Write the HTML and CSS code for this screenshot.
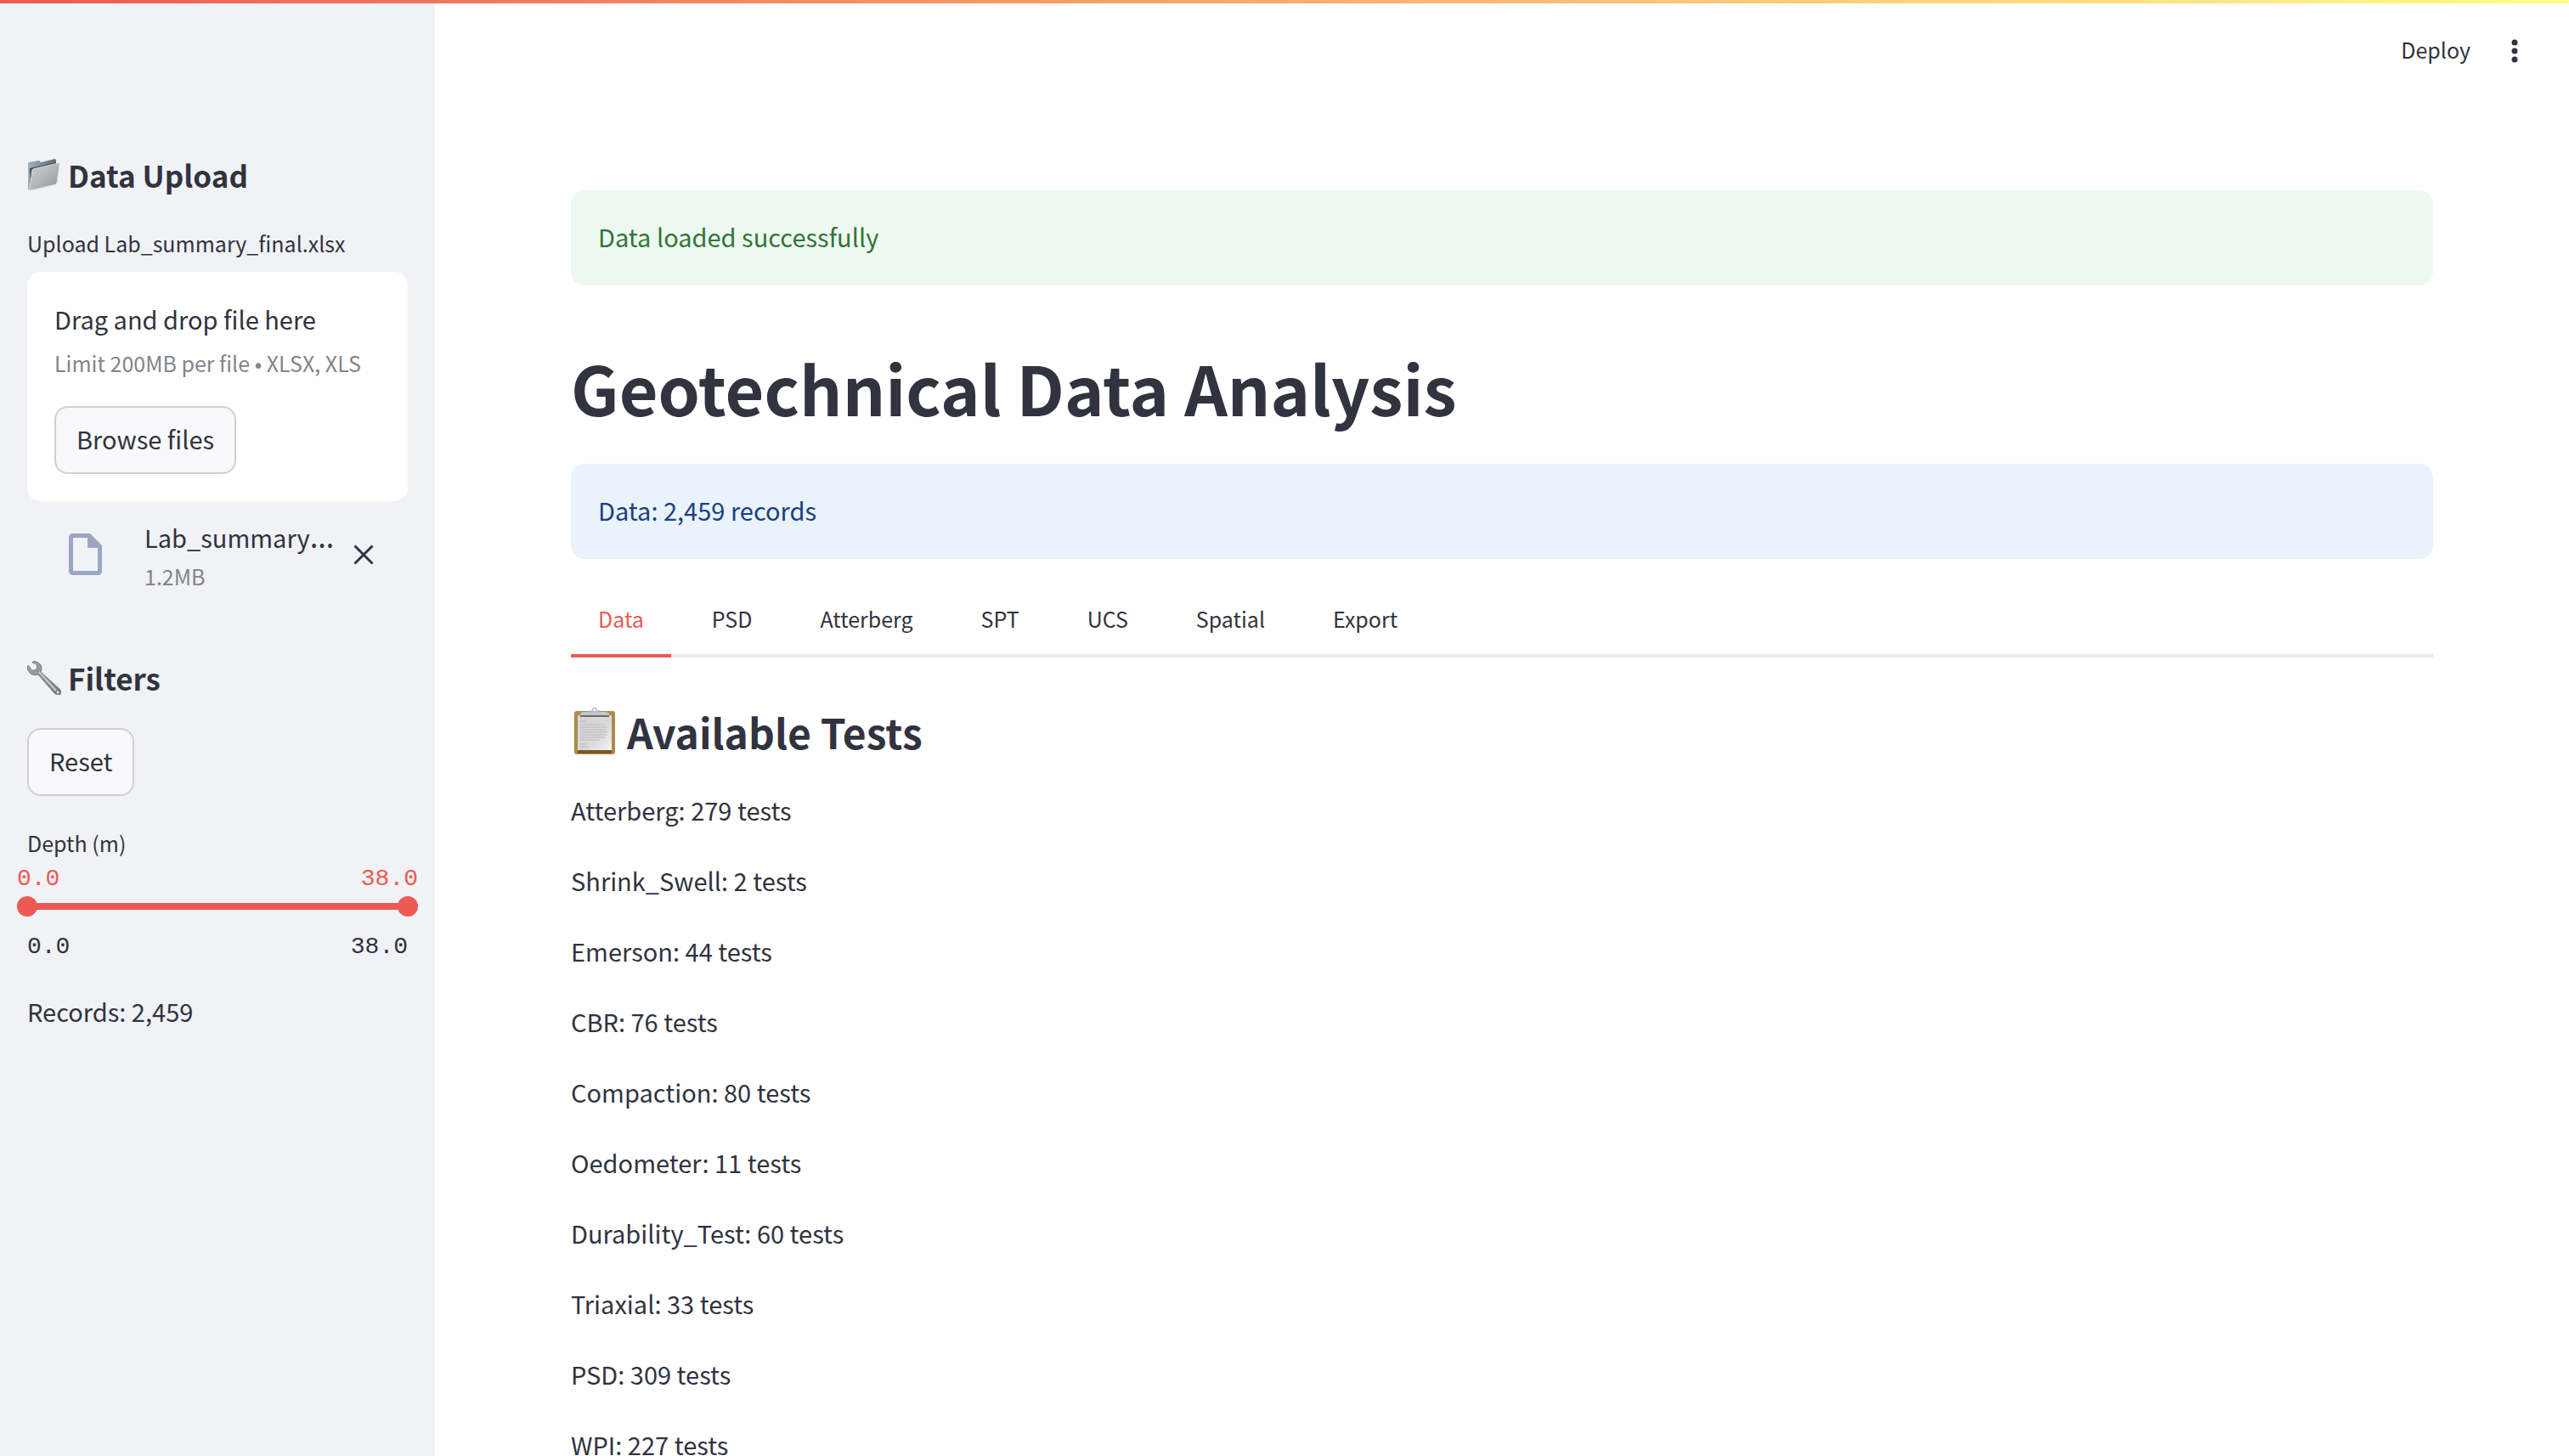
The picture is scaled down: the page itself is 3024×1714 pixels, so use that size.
FILE: index.html
```html
<!DOCTYPE html>
<html lang="en">
<head>
<meta charset="utf-8">
<meta name="viewport" content="width=device-width, initial-scale=1">
<title>Geotechnical Data Analysis</title>
<link rel="stylesheet" href="styles.css">
</head>
<body>
<div class="decoration"></div>
<div class="app">
  <aside class="sidebar">
    <h3 class="side-title">
      <svg class="emoji" viewBox="0 0 40 40" aria-hidden="true">
        <defs>
          <linearGradient id="folderFront" x1="0" y1="0" x2="1" y2="1"><stop offset="0" stop-color="#c9cdd0"/><stop offset=".5" stop-color="#b3b7ba"/><stop offset="1" stop-color="#8d9296"/></linearGradient>
          <linearGradient id="folderBack" x1="0" y1="0" x2="1" y2="0"><stop offset="0" stop-color="#a3b1bb"/><stop offset="1" stop-color="#5b6b78"/></linearGradient>
        </defs>
        <path d="M1 6 2 5 14 3 16 5 33 1 34 3V28L3 38 1 37Z" fill="url(#folderBack)"/>
        <path d="M3 12 34 5V9L7 15 4 36Z" fill="#42525f"/>
        <path d="M7 13 37 6Q38 6 38 7L35 29 34 31 4 38 3 37 6 14Z" fill="url(#folderFront)" stroke="#d9dddf" stroke-width="1"/>
      </svg>
      <span>Data Upload</span>
    </h3>
    <section class="uploader">
      <label class="field-label" for="file-button">Upload Lab_summary_final.xlsx</label>
      <div class="dropzone">
        <span class="drop-main">Drag and drop file here</span>
        <span class="drop-limit">Limit 200MB per file • XLSX, XLS</span>
        <button class="btn" id="file-button" type="button">Browse files</button>
      </div>
      <div class="file">
        <svg class="file-icon" viewBox="0 0 40 50" aria-hidden="true"><path fill-rule="evenodd" d="M5 0H25L39 14V44Q39 49 34 49H5Q0 49 0 44V5Q0 0 5 0ZM5 5V44H34V17H22V5Z" fill="#9ca6c3"/></svg>
        <div class="file-text">
          <span class="file-name">Lab_summary<span class="dots">…</span></span>
          <span class="file-size">1.2MB</span>
        </div>
        <button class="icon-btn" type="button" aria-label="Remove file">
          <svg class="close-icon" viewBox="0 0 24 24" aria-hidden="true"><path d="M1.500 1.500 22.500 22.500M22.500 1.500 1.500 22.500" stroke="#31333f" stroke-width="3" fill="none"/></svg>
        </button>
      </div>
    </section>
    <h3 class="side-title">
      <svg class="emoji" viewBox="0 0 40 40" aria-hidden="true">
        <defs><linearGradient id="steel" x1="0" y1="0" x2="1" y2="1"><stop offset="0" stop-color="#a9b0b8"/><stop offset=".4" stop-color="#8b9199"/><stop offset="1" stop-color="#82777a"/></linearGradient></defs>
        <path fill-rule="evenodd" d="M7 .500Q13 .500 16 5Q18 9 16 13L39 34Q41 38 38 40Q35 41 32 38L13 16Q8 18 4 15Q0 12 0 6L2 6 5 11 9 11 12 8 11 4 6 2ZM36 35A2 2 0 1 0 36 39A2 2 0 1 0 36 35Z" fill="url(#steel)" stroke="#747b85" stroke-width="1"/>
        <path d="M14 13 34 35" stroke="#c6cad0" stroke-width="2"/>
      </svg>
      <span>Filters</span>
    </h3>
    <button class="btn reset" type="button">Reset</button>
    <fieldset class="slider">
      <legend class="field-label">Depth (m)</legend>
      <div class="slider-values"><output>0.0</output><output>38.0</output></div>
      <div class="slider-track">
        <input class="range" type="range" min="0" max="38" step="0.1" value="0" aria-label="Minimum depth">
        <input class="range" type="range" min="0" max="38" step="0.1" value="38" aria-label="Maximum depth">
      </div>
      <div class="slider-bounds"><span>0.0</span><span>38.0</span></div>
    </fieldset>
    <p class="records">Records: 2,459</p>
  </aside>
  <div class="main">
    <header class="toolbar">
      <button class="deploy" type="button">Deploy</button>
      <button class="icon-btn" type="button" aria-label="Main menu">
        <svg class="menu-icon" viewBox="0 0 8 28" aria-hidden="true"><circle cx="4" cy="4" r="3.500"/><circle cx="4" cy="14" r="3.500"/><circle cx="4" cy="24" r="3.500"/></svg>
      </button>
    </header>
    <main class="content">
      <div class="alert success" role="status">Data loaded successfully</div>
      <h1 class="title">Geotechnical Data Analysis</h1>
      <div class="alert info" role="status">Data: 2,459 records</div>
      <div class="tabs" role="tablist">
        <button class="tab active" type="button" role="tab" aria-selected="true">Data</button>
        <button class="tab" type="button" role="tab">PSD</button>
        <button class="tab" type="button" role="tab">Atterberg</button>
        <button class="tab" type="button" role="tab">SPT</button>
        <button class="tab" type="button" role="tab">UCS</button>
        <button class="tab" type="button" role="tab">Spatial</button>
        <button class="tab" type="button" role="tab">Export</button>
      </div>
      <h2 class="section-title">
        <svg class="clipboard" viewBox="0 0 56 56" aria-hidden="true">
          <defs><linearGradient id="paper" x1="0" y1="0" x2="1" y2="1"><stop offset="0" stop-color="#d4d4d6"/><stop offset=".6" stop-color="#d9d9da"/><stop offset="1" stop-color="#f4f4f5"/></linearGradient></defs>
          <rect x="4" y="4" width="48" height="51" rx="3" fill="#b08a4d"/>
          <path d="M8 49H48V54H8Z" fill="#7d592b"/>
          <rect x="8" y="9" width="40" height="41" fill="url(#paper)"/>
          <path d="M11 16H18M11 20H39M11 23H42M11 26H41M11 29H43M11 32H42M11 35H40M11 38H34M11 43H18M11 46H21" stroke="#bcbcbf" stroke-width="1"/>
          <path d="M11 10V7Q12 5 17 5H21L24 4H32L35 5H39Q44 5 45 7V10Z" fill="#c2c7cd"/>
          <path d="M11 10H45" stroke="#716a67" stroke-width="2"/>
          <circle cx="28" cy="3" r="2.500" fill="none" stroke="#b4bcc6" stroke-width="1.500"/>
          <path d="M21 5 24 4M32 4 35 5" stroke="#8eb0d2" stroke-width="2"/>
        </svg>
        <span>Available Tests</span>
      </h2>
      <div class="tests">
        <p>Atterberg: 279 tests</p>
        <p>Shrink_Swell: 2 tests</p>
        <p>Emerson: 44 tests</p>
        <p>CBR: 76 tests</p>
        <p>Compaction: 80 tests</p>
        <p>Oedometer: 11 tests</p>
        <p>Durability_Test: 60 tests</p>
        <p>Triaxial: 33 tests</p>
        <p>PSD: 309 tests</p>
        <p>WPI: 227 tests</p>
      </div>
    </main>
  </div>
</div>
</body>
</html>
```
FILE: styles.css
```css
:root {
  --text: #31333f;
  --muted: #83848b;
  --primary: #ec5a53;
  --sans: "Noto Sans CJK JP", "Noto Sans", sans-serif;
  --mono: "Liberation Mono", monospace;
}

* {
  box-sizing: border-box;
}

body {
  margin: 0;
  height: 100vh;
  overflow: hidden;
  background: #fff;
  color: var(--text);
  font: 29px/48px var(--sans);
}

h1, h2, h3, p {
  margin: 0;
}

button {
  font: inherit;
  color: inherit;
  cursor: pointer;
}

/* thin gradient bar across the top of the window */
.decoration {
  position: absolute;
  top: 0;
  left: 0;
  right: 0;
  height: 4px;
  background: linear-gradient(90deg, #ec5a53, #fffd8c);
}

.app {
  display: flex;
  height: 100%;
}

/* Sidebar */
.sidebar {
  flex: none;
  width: 512px;
  padding: 182px 32px 0;
  background: #f0f2f6;
}

.side-title {
  display: flex;
  align-items: center;
  gap: 8px;
  font-size: 35px;
  font-weight: 700;
  line-height: 48px;
}

.emoji {
  flex: none;
  width: 40px;
  height: 40px;
}

.field-label {
  display: block;
  padding: 0;
  font-size: 25px;
  line-height: 40px;
}

.uploader {
  margin: 36px 0 76px;
}

.dropzone {
  display: flex;
  flex-direction: column;
  align-items: flex-start;
  margin-top: 14px;
  padding: 31px 32px 32px;
  border-radius: 16px;
  background: #fff;
}

.drop-limit,
.file-size {
  color: var(--muted);
  font-size: 25px;
  line-height: 40px;
}

.drop-limit {
  margin-top: 8px;
}

.btn {
  height: 80px;
  padding: 0 24px 4px;
  border: 2px solid #d0d0d4;
  border-radius: 16px;
  background: #f9f9fb;
}

.dropzone .btn {
  margin-top: 31px;
}

.file {
  display: flex;
  align-items: center;
  padding: 18px 40px 0 49px;
}

.file-icon {
  flex: none;
  width: 40px;
  height: 50px;
}

.file-text {
  display: flex;
  flex: 1;
  flex-direction: column;
  gap: 2px;
  min-width: 0;
  margin-left: 49px;
}

.file-name {
  white-space: nowrap;
}

.dots {
  font-family: "Noto Sans", sans-serif;
  font-size: 36px;
  line-height: 0;
}

.icon-btn {
  display: flex;
  padding: 0;
  border: 0;
  background: none;
}

.close-icon {
  width: 24px;
  height: 24px;
}

.reset {
  display: block;
  margin-top: 35px;
}

.slider {
  margin: 35px -12px 0;
  padding: 0;
  border: 0;
}

.slider .field-label {
  margin-left: 12px;
}

.slider-values,
.slider-bounds {
  display: flex;
  justify-content: space-between;
  font: 28px/40px var(--mono);
}

.slider-values {
  padding-top: 3px;
  color: var(--primary);
}

.slider-bounds {
  padding: 16px 12px 0;
}

/* both thumbs share one grid cell so that they run on the same track */
.slider-track {
  display: grid;
  height: 24px;
  background: linear-gradient(var(--primary), var(--primary)) center / calc(100% - 24px) 8px no-repeat;
}

.range {
  grid-area: 1 / 1;
  width: 100%;
  height: 24px;
  margin: 0;
  appearance: none;
  background: none;
  pointer-events: none;
}

.range::-webkit-slider-thumb {
  width: 24px;
  height: 24px;
  border-radius: 50%;
  appearance: none;
  background: var(--primary);
  pointer-events: auto;
}

.records {
  margin-top: 31px;
}

/* Main column */
.main {
  flex: 1;
  min-width: 0;
}

.toolbar {
  display: flex;
  align-items: center;
  justify-content: flex-end;
  gap: 48px;
  height: 120px;
  padding-right: 60px;
}

.deploy {
  padding: 0 0 4px;
  border: 0;
  background: none;
  font-size: 25px;
  line-height: 40px;
}

.menu-icon {
  width: 8px;
  height: 28px;
  fill: var(--text);
}

.content {
  padding: 104px 160px 0;
}

.alert {
  padding: 30px 32px 34px;
  border-radius: 16px;
}

.success {
  background: #edf9f0;
  color: #337439;
}

.info {
  background: #eaf2fc;
  color: #194180;
}

.title {
  margin: 67px 0 37px;
  font-size: 79px;
  font-weight: 700;
  line-height: 106px;
}

.tabs {
  display: flex;
  gap: 16px;
  margin-top: 32px;
  box-shadow: inset 0 -4px #e9e9ea;
}

.tab {
  height: 84px;
  padding: 0 32px 4px;
  border: 0;
  border-bottom: 4px solid transparent;
  background: none;
  font-size: 25px;
  line-height: 40px;
}

.tab.active {
  border-bottom-color: var(--primary);
  color: var(--primary);
}

.section-title {
  display: flex;
  align-items: center;
  gap: 10px;
  margin-top: 53px;
  font-size: 48px;
  font-weight: 700;
  line-height: 68px;
}

.clipboard {
  flex: none;
  width: 56px;
  height: 56px;
}

.tests {
  display: grid;
  gap: 32px;
  margin-top: 33px;
  line-height: 51px;
}
```
